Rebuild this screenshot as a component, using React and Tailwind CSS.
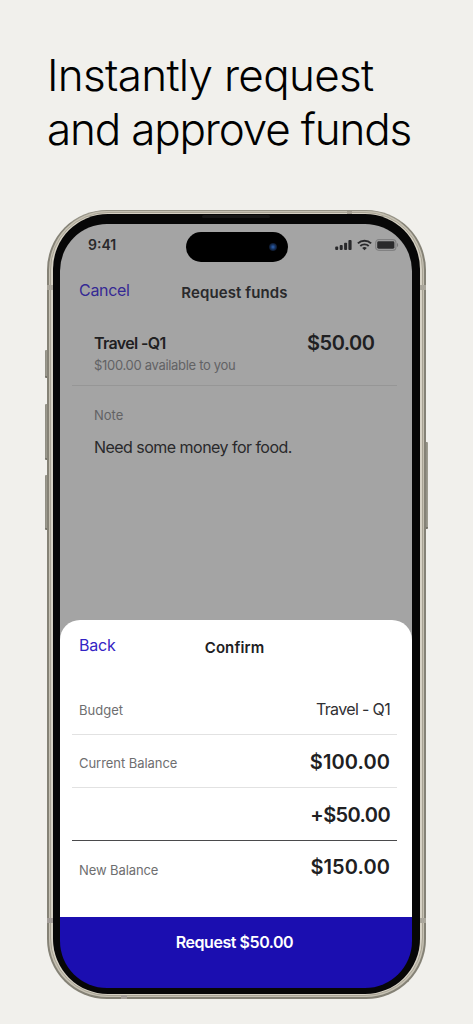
import clsx from 'clsx'

const rows = [
  { label: 'Budget', value: 'Travel - Q1', row: 'h-[53px] pt-[3px] border-[#e2e2e2]', labelText: 'mt-[2px]', text: 'text-base text-[#303033] tracking-[-0.65px]' },
  { label: 'Current Balance', value: '$100.00', row: 'h-[53px] pt-[3px] border-[#e2e2e2]', labelText: 'mt-[2px] tracking-[-0.05px]', text: 'text-[20px] font-semibold tracking-[0.1px]' },
  { label: '', value: '+$50.00', row: 'h-[53px] pt-[3px] border-[#4a4a4c]', labelText: '', text: 'text-[20px] font-semibold tracking-[-0.6px]' },
  { label: 'New Balance', value: '$150.00', row: 'h-[53px] pt-[1px] border-transparent', labelText: 'mt-[6px] tracking-[-0.1px]', text: 'text-[20px] font-semibold tracking-[0.1px]' },
]

function SideButton({ className }) {
  return <div className={clsx('absolute w-[3px] rounded-[1px] border-b-2 border-[#77756b] bg-gradient-to-r', className)} />
}

function SignalIcon() {
  return (
    <svg width="18" height="12" viewBox="0 0 18 12" fill="#29292b">
      <rect x="0.2" y="7.6" width="3" height="3.4" rx="0.9" />
      <rect x="4.7" y="6" width="3" height="5" rx="0.9" />
      <rect x="9.1" y="3.7" width="3" height="7.3" rx="0.9" />
      <rect x="13.4" y="1" width="3.2" height="10" rx="0.9" />
    </svg>
  )
}

function WifiIcon() {
  return (
    <svg width="15" height="12" viewBox="0 0 15 12" fill="none" stroke="#29292b">
      <path d="M0.9 4.4C4.6 0.7 10.4 0.7 14.1 4.4" strokeWidth="2" />
      <path d="M3.3 7C5.6 4.8 9.4 4.8 11.7 7" strokeWidth="1.9" />
      <path d="M5.2 9C6.5 7.8 8.5 7.8 9.8 9L7.5 11.3Z" fill="#29292b" stroke="none" />
    </svg>
  )
}

function BatteryIcon() {
  return (
    <svg width="24" height="12" viewBox="0 0 24 12">
      <rect x="0.7" y="0.7" width="20.2" height="10.6" rx="3" fill="none" stroke="#29292b" strokeOpacity="0.28" strokeWidth="1.2" />
      <rect x="2.2" y="2.3" width="17.2" height="7.4" rx="1.4" fill="#29292b" />
      <path d="M22 4v4c.7-.3 1.1-1.1 1.1-2s-.4-1.7-1.1-2z" fill="#29292b" fillOpacity="0.35" />
    </svg>
  )
}

function StatusBar() {
  return (
    <div className="relative h-[44px] shrink-0 flex items-center justify-between pl-[28px] pr-[13px] pb-[2px]">
      <span className="text-[14px] leading-none font-semibold text-[#29292b]">9:41</span>
      <div className="flex items-center gap-[3.5px]">
        <SignalIcon />
        <WifiIcon />
        <BatteryIcon />
      </div>
      <div className="absolute left-[125.5px] top-[8.5px] w-[102.5px] h-[30px] rounded-full bg-black">
        <div className="absolute right-[11px] top-[11px] size-[8px] rounded-full bg-[radial-gradient(circle,#2f64b4_0%,#173462_40%,#090d16_80%)]" />
      </div>
    </div>
  )
}

function RequestScreen() {
  return (
    <div className="flex flex-col">
      <div className="grid grid-cols-[1fr_auto_1fr] items-start pl-[19px] pr-[22px] pt-[12px]">
        <button className="justify-self-start text-base leading-[20px] tracking-[-0.3px] text-[#352994]">Cancel</button>
        <h2 className="mt-[3px] text-[15px] leading-[20px] font-semibold tracking-[0.1px] text-[#29292b]">Request funds</h2>
      </div>
      <div className="ml-[12px] mr-[15px] pt-[30px] pl-[22px] pr-[22.5px] h-[83px] border-b border-[#969696] flex items-start justify-between">
        <div className="whitespace-nowrap">
          <p className="text-base leading-[20px] font-semibold tracking-[-0.65px] text-[#202022]">Travel -Q1</p>
          <p className="mt-[2px] text-[13px] leading-[20px] tracking-[-0.31px] text-[#626264]">$100.00 available to you</p>
        </div>
        <p className="text-[20px] leading-[20px] font-semibold tracking-[-0.5px] text-[#202022]">$50.00</p>
      </div>
      <div className="pl-[34px] pt-[19px]">
        <p className="text-[13px] leading-[20px] text-[#626264]">Note</p>
        <p className="mt-[12.5px] text-base leading-[20px] tracking-[-0.53px] text-[#29292b]">Need some money for food.</p>
      </div>
    </div>
  )
}

function ConfirmSheet() {
  return (
    <div className="absolute inset-x-0 bottom-0 h-[368.5px] flex flex-col">
      <div className="grow bg-white rounded-t-[20px]">
        <div className="h-[62px] grid grid-cols-[1fr_auto_1fr] items-start pl-[19px] pr-[22px] pt-[15px]">
          <button className="justify-self-start text-base leading-[20px] tracking-[-0.2px] text-[#3324c4]">Back</button>
          <h2 className="mt-[3px] text-[15px] leading-[20px] font-semibold tracking-[0.1px] text-[#202022]">Confirm</h2>
        </div>
        <div className="ml-[12px] mr-[15px]">
          {rows.map((r) => (
            <div key={r.value} className={clsx('flex items-center justify-between pl-[7px] pr-[7px] border-b', r.row)}>
              <span className={clsx('text-[13px] leading-none text-[#6e6e70]', r.labelText)}>{r.label}</span>
              <span className={clsx('leading-none text-[#202022]', r.text)}>{r.value}</span>
            </div>
          ))}
        </div>
      </div>
      <button className="h-[71.5px] shrink-0 pt-[15px] pr-[3px] flex items-start justify-center rounded-b-[47px] bg-[#1b0eb0] text-white text-base leading-[20px] font-semibold tracking-[-0.45px]">
        Request $50.00
      </button>
    </div>
  )
}

function Phone() {
  return (
    <div className="relative mt-[52px] ml-[47px] w-[379px] h-[789px]">
      <SideButton className="left-[-2px] top-[140px] h-[28px] from-[#8c8a80] to-[#aaa89b]" />
      <SideButton className="left-[-2px] top-[194px] h-[56px] from-[#8c8a80] to-[#aaa89b]" />
      <SideButton className="left-[-2px] top-[265px] h-[55px] from-[#8c8a80] to-[#aaa89b]" />
      <SideButton className="right-[-2px] top-[232px] h-[87px] from-[#85837a] to-[#a3a194]" />
      <div className="relative size-full rounded-[60px] border-2 border-t border-[#858276] border-t-[#969386] bg-[#c5c0b2] px-[1px] pt-[1px] pb-[1px]">
        <div className="size-full rounded-[58px] border border-[#a9a495] bg-[#d6d1c4] px-[2px] pt-[1px] pb-[1px]">
          <div className="size-full rounded-[55px] bg-[#070707] pl-[7px] pr-[8px] pt-[9.5px] pb-[6px]">
            <div className="relative size-full">
              <div className="size-full rounded-t-[47px] rounded-b-[60px] bg-[#a4a4a4]">
                <StatusBar />
                <RequestScreen />
              </div>
              <ConfirmSheet />
            </div>
          </div>
        </div>
      </div>
      <div className="absolute left-0 top-[75px] w-[6px] h-[5px] bg-[#aaa69b]" />
      <div className="absolute right-0 top-[75px] w-[6px] h-[5px] bg-[#aaa69b]" />
      <div className="absolute left-0 bottom-[76px] w-[6px] h-[5px] bg-[#a39d98]" />
      <div className="absolute right-0 bottom-[76px] w-[6px] h-[5px] bg-[#aaa69b]" />
      <div className="absolute left-[74px] bottom-0 w-[6px] h-[4px] bg-[#a39d98]" />
      <div className="absolute right-[74px] top-[1px] w-[5px] h-[3px] bg-[#a39d90]" />
      <div className="absolute left-[155px] top-[5px] w-[68px] h-[3px] rounded-full bg-[#161616]" />
    </div>
  )
}

export default function App() {
  return (
    <div className="w-[473px] h-[1024px] overflow-hidden bg-[#f1f0ec] font-['Inter',sans-serif]">
      <h1 className="pt-[49px] pl-[47px] h-[158px] text-[44px] leading-[53.5px] font-light text-black whitespace-nowrap">
        <span className="block tracking-[-0.7px]">Instantly request</span>
        <span className="block tracking-[-1.18px]">and approve funds</span>
      </h1>
      <Phone />
    </div>
  )
}
